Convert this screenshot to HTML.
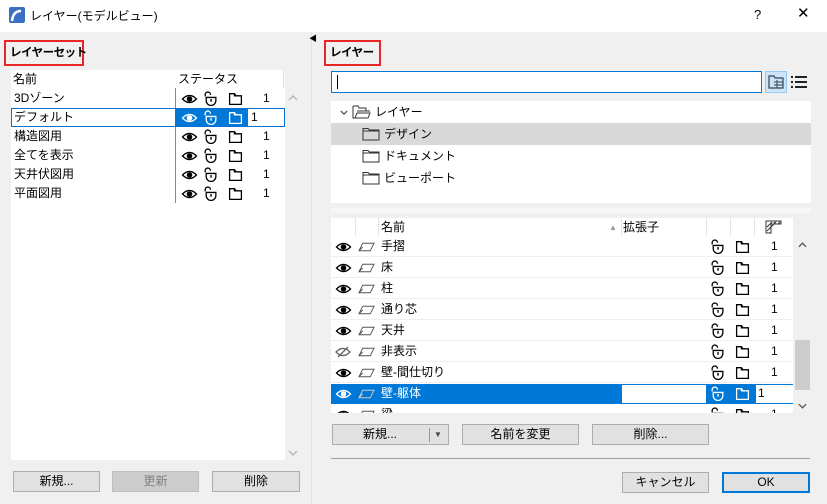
<!DOCTYPE html>
<html><head><meta charset="utf-8"><style>
*{box-sizing:border-box;margin:0;padding:0}
body{width:827px;height:504px;background:#f0f0f0;font-family:"Liberation Sans","Noto Sans CJK JP",sans-serif;font-size:12px;color:#000;position:relative;overflow:hidden}
.a{position:absolute}
.t{position:absolute;white-space:nowrap;line-height:16px}
.btn{position:absolute;background:#e1e1e1;border:1px solid #adadad;text-align:center;line-height:19px;font-size:12px}
svg.i{position:absolute}
.red{position:absolute;border:2px solid #e8262a;font-weight:bold;font-size:11.5px;line-height:22px;padding-left:4px;white-space:nowrap;letter-spacing:-0.5px}
</style></head><body>
<svg width="0" height="0" style="position:absolute">
<defs>
<symbol id="eye" viewBox="0 0 16 12"><path d="M1 6Q8 -1 15 6Q8 13 1 6Z" fill="none" stroke="currentColor" stroke-width="1.3"/><circle cx="8" cy="6" r="2.8" fill="currentColor"/></symbol>
<symbol id="lock" viewBox="0 0 14 14"><path d="M2 5V3.5A2.5 2.5 0 0 1 7 3.5" fill="none" stroke="currentColor" stroke-width="1.2"/><path d="M3 6H12V9A4.5 4.5 0 0 1 3 9Z" fill="none" stroke="currentColor" stroke-width="1.2"/><path d="M7.5 7.5V10" stroke="currentColor" stroke-width="1.3"/></symbol>
<symbol id="page" viewBox="0 0 14 14"><path d="M1.5 2.5H6L7.5 4.5H12.5V12.5H1.5Z M6 2.5V4.5H7.5" fill="none" stroke="currentColor" stroke-width="1.2"/></symbol>
<symbol id="lay" viewBox="0 0 18 10"><path d="M5 1H17L13 9H1Z M1 9L5 5" fill="none" stroke="currentColor" stroke-width="1"/></symbol>
<symbol id="fold" viewBox="0 0 18 14"><path d="M1 1.5H6L7.5 3H17V13H1Z M1 4H17" fill="none" stroke="#333" stroke-width="1"/></symbol>
<symbol id="up" viewBox="0 0 10 6"><path d="M1 5L5 1L9 5" fill="none" stroke="currentColor" stroke-width="1.5"/></symbol>
<symbol id="dn" viewBox="0 0 10 6"><path d="M1 1L5 5L9 1" fill="none" stroke="currentColor" stroke-width="1.5"/></symbol>
</defs></svg>

<div class="a" style="left:0;top:0;width:827px;height:32px;background:#fff"></div>
<svg class="i" style="left:9px;top:7px" width="16" height="16"><rect width="16" height="16" rx="2" fill="#3a6fc4"/><path d="M3 14Q4 4 12 4" fill="none" stroke="#fff" stroke-width="2.5"/></svg>
<div class="t" style="left:30px;top:8px;font-size:12px">レイヤー(モデルビュー)</div>
<div class="t" style="left:754px;top:7px;font-size:13px">?</div>
<div class="t" style="left:797px;top:6px;font-size:15px">✕</div>

<div class="red" style="left:4px;top:40px;width:80px;height:26px">レイヤーセット</div>
<div class="a" style="left:11px;top:70px;width:274px;height:390px;background:#fff"></div>
<div class="a" style="left:175px;top:88px;width:1px;height:115px;background:#888"></div>
<div class="a" style="left:283px;top:70px;width:1px;height:18px;background:#ddd"></div>
<div class="t" style="left:13px;top:71px">名前</div>
<div class="t" style="left:178px;top:71px">ステータス</div>
<div class="a" style="left:11px;top:108px;width:165px;height:19px;border:1px solid #0a6fcf"></div>
<div class="a" style="left:176px;top:108px;width:109px;height:19px;background:#0078d7;border:1px solid #0a6fcf"></div>
<div class="a" style="left:248px;top:109px;width:36px;height:17px;background:#fff"></div>
<div class="t" style="left:14px;top:90px">3Dゾーン</div>
<div class="t" style="left:14px;top:109px">デフォルト</div>
<div class="t" style="left:14px;top:128px">構造図用</div>
<div class="t" style="left:14px;top:147px">全てを表示</div>
<div class="t" style="left:14px;top:166px">天井伏図用</div>
<div class="t" style="left:14px;top:185px">平面図用</div>
<div id="lrows"></div>
<svg class="i" style="left:288px;top:95px;color:#bbb" width="10" height="6"><use href="#up"/></svg>
<svg class="i" style="left:288px;top:450px;color:#bbb" width="10" height="6"><use href="#dn"/></svg>
<div class="btn" style="left:13px;top:471px;width:87px;height:21px">新規...</div>
<div class="btn" style="left:112px;top:471px;width:87px;height:21px;background:#ccc;border-color:#bfbfbf;color:#838383">更新</div>
<div class="btn" style="left:212px;top:471px;width:88px;height:21px">削除</div>

<div class="a" style="left:311px;top:32px;width:1px;height:472px;background:#e4e4e4"></div>
<div class="t" style="left:309px;top:31px;font-size:8px">◀</div>

<div class="red" style="left:324px;top:40px;width:57px;height:26px">レイヤー</div>
<div class="a" style="left:331px;top:71px;width:431px;height:22px;background:#fff;border:1px solid #0078d7"></div>
<div class="a" style="left:337px;top:75px;width:1px;height:14px;background:#000"></div>
<div class="a" style="left:765px;top:71px;width:22px;height:22px;background:#cce4f7;border:1px solid #99c9ef"></div>
<svg class="i" style="left:768px;top:75px" width="17" height="14"><path d="M1 1H6L7 3H15V13H1Z" fill="none" stroke="#345" stroke-width="1.2"/><path d="M6 7H15M6 10H15M9 5V13" stroke="#345"/></svg>
<svg class="i" style="left:790px;top:75px" width="18" height="14"><path d="M1 2H3M5 2H17M1 7H3M5 7H17M1 12H3M5 12H17" stroke="#222" stroke-width="2"/></svg>

<div class="a" style="left:331px;top:101px;width:480px;height:102px;background:#fff"></div>
<div class="a" style="left:331px;top:123px;width:480px;height:22px;background:#d9d9d9"></div>
<svg class="i" style="left:340px;top:110px;color:#555" width="8" height="5"><use href="#dn"/></svg>
<svg class="i" style="left:352px;top:104px" width="20" height="16"><path d="M1 2H6L7 4H14V7M1 2V14H4" fill="none" stroke="#333"/><path d="M5 9H18L16 14H3Z M5 7H18" fill="none" stroke="#333"/></svg>
<div class="t" style="left:375px;top:104px">レイヤー</div>
<svg class="i" style="left:362px;top:127px" width="18" height="14"><use href="#fold"/></svg>
<div class="t" style="left:384px;top:126px">デザイン</div>
<svg class="i" style="left:362px;top:149px" width="18" height="14"><use href="#fold"/></svg>
<div class="t" style="left:384px;top:148px">ドキュメント</div>
<svg class="i" style="left:362px;top:171px" width="18" height="14"><use href="#fold"/></svg>
<div class="t" style="left:384px;top:170px">ビューポート</div>

<div class="a" style="left:331px;top:208px;width:480px;height:5px;background:#f7f7f7"></div>
<div class="a" style="left:331px;top:218px;width:462px;height:195px;background:#fff"></div>
<div class="a" style="left:355px;top:218px;width:1px;height:18px;background:#e5e5e5"></div>
<div class="a" style="left:378px;top:218px;width:1px;height:18px;background:#e5e5e5"></div>
<div class="a" style="left:621px;top:218px;width:1px;height:18px;background:#e5e5e5"></div>
<div class="a" style="left:706px;top:218px;width:1px;height:18px;background:#e5e5e5"></div>
<div class="a" style="left:730px;top:218px;width:1px;height:18px;background:#e5e5e5"></div>
<div class="a" style="left:754px;top:218px;width:1px;height:18px;background:#e5e5e5"></div>
<div class="t" style="left:381px;top:219px">名前</div>
<div class="t" style="left:609px;top:220px;font-size:8px;color:#999">▲</div>
<div class="t" style="left:623px;top:219px">拡張子</div>
<svg class="i" style="left:765px;top:220px" width="18" height="14"><path d="M1 1H16V4H6V13H1Z" fill="#fff" stroke="#333"/><path d="M2 7L7 2M2 11L11 2M5 13L6 12M9 3L10 2M13 4L15 2" stroke="#333"/></svg>

<div id="rrows"></div>
<div class="a" style="left:794px;top:236px;width:17px;height:177px;background:#f0f0f0"></div>
<div class="a" style="left:795px;top:340px;width:15px;height:50px;background:#cdcdcd"></div>
<svg class="i" style="left:798px;top:242px;color:#555" width="9" height="6"><use href="#up"/></svg>
<svg class="i" style="left:798px;top:403px;color:#555" width="9" height="6"><use href="#dn"/></svg>

<div class="btn" style="left:332px;top:424px;width:117px;height:21px;text-align:left;padding-left:30px">新規...<span style="position:absolute;left:96px;top:3px;width:1px;height:14px;background:#999"></span><span style="position:absolute;left:101px;top:0;font-size:8px;color:#444">▼</span></div>
<div class="btn" style="left:462px;top:424px;width:117px;height:21px">名前を変更</div>
<div class="btn" style="left:592px;top:424px;width:117px;height:21px">削除...</div>
<div class="a" style="left:331px;top:458px;width:479px;height:1px;background:#a0a0a0"></div>
<div class="btn" style="left:622px;top:472px;width:87px;height:21px">キャンセル</div>
<div class="btn" style="left:722px;top:472px;width:88px;height:21px;border:2px solid #0078d7;line-height:17px">OK</div>

<script>
var L=document.getElementById('lrows'),h='';
for(var k=0;k<6;k++){var y=91+k*19,c=k==1?'#fff':'#000';
h+='<svg class="i" style="left:181px;top:'+(y+2)+'px;color:'+c+'" width="17" height="12"><use href="#eye"/></svg>';
h+='<svg class="i" style="left:203px;top:'+y+'px;color:'+c+'" width="15" height="15"><use href="#lock"/></svg>';
h+='<svg class="i" style="left:228px;top:'+y+'px;color:'+c+'" width="15" height="15"><use href="#page"/></svg>';
h+='<div class="t" style="left:'+(k==1?251:263)+'px;top:'+(y-1)+'px">1</div>';}
L.innerHTML=h;
var R=document.getElementById('rrows'),n=['手摺','床','柱','通り芯','天井','非表示','壁-間仕切り','壁-躯体','梁'];h='';
for(k=0;k<9;k++){var y=236+k*21,s=k==7,c=s?'#fff':'#000';
if(s)h+='<div class="a" style="left:331px;top:'+(y+1)+'px;width:462px;height:20px;background:#0078d7"></div><div class="a" style="left:622px;top:'+(y+2)+'px;width:84px;height:18px;background:#fff"></div><div class="a" style="left:756px;top:'+(y+2)+'px;width:37px;height:18px;background:#fff"></div>';
else h+='<div class="a" style="left:331px;top:'+(y+20)+'px;width:462px;height:1px;background:#efefef"></div>';
if(k==5)h+='<svg class="i" style="left:335px;top:'+(y+5)+'px" width="17" height="12"><path d="M1 6Q8 -1 15 6Q8 13 1 6Z" fill="none" stroke="#666" stroke-width="1.3"/><path d="M3 11L13 1" stroke="#666" stroke-width="1.3"/></svg>';
else h+='<svg class="i" style="left:335px;top:'+(y+5)+'px;color:'+c+'" width="17" height="12"><use href="#eye"/></svg>';
h+='<svg class="i" style="left:358px;top:'+(y+6)+'px;color:'+(s?'#ccc':'#555')+'" width="17" height="10"><use href="#lay"/></svg>';
h+='<div class="t" style="left:381px;top:'+(y+2)+'px;color:'+c+'">'+n[k]+'</div>';
h+='<svg class="i" style="left:710px;top:'+(y+3)+'px;color:'+c+'" width="15" height="15"><use href="#lock"/></svg>';
h+='<svg class="i" style="left:735px;top:'+(y+3)+'px;color:'+c+'" width="15" height="15"><use href="#page"/></svg>';
h+='<div class="t" style="left:'+(s?758:771)+'px;top:'+(y+2)+'px">1</div>';}
R.innerHTML='<div style="position:absolute;left:0;top:0;width:827px;height:413px;overflow:hidden">'+h+'</div>';
</script>
</body></html>
